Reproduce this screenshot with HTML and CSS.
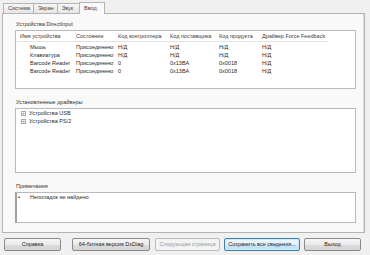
FILE: index.html
```html
<!DOCTYPE html>
<html lang="ru">
<head>
  <meta charset="UTF-8" />
  <title>Средство диагностики DirectX</title>
  <link rel="stylesheet" href="styles.css">
</head>
<body>

  <div class="tabs">
    <div class="tab">Система</div>
    <div class="tab">Экран</div>
    <div class="tab">Звук</div>
    <div class="tab active">Ввод</div>
  </div>

  <div class="page">
    <div class="group">
      <div class="group-title">Устройства DirectInput</div>
      <div class="box devices">
        <div class="list-head">
          <span>Имя устройства</span>
          <span>Состояние</span>
          <span>Код контроллера</span>
          <span>Код поставщика</span>
          <span>Код продукта</span>
          <span>Драйвер Force Feedback</span>
        </div>
        <div class="list-row">
          <span class="name">Мышь</span><span>Присоединено</span><span>Н/Д</span><span>Н/Д</span><span>Н/Д</span><span>Н/Д</span>
        </div>
        <div class="list-row">
          <span class="name">Клавиатура</span><span>Присоединено</span><span>Н/Д</span><span>Н/Д</span><span>Н/Д</span><span>Н/Д</span>
        </div>
        <div class="list-row">
          <span class="name">Barcode Reader</span><span>Присоединено</span><span>0</span><span>0x13BA</span><span>0x0018</span><span>Н/Д</span>
        </div>
        <div class="list-row">
          <span class="name">Barcode Reader</span><span>Присоединено</span><span>0</span><span>0x13BA</span><span>0x0018</span><span>Н/Д</span>
        </div>
      </div>
    </div>

    <div class="group">
      <div class="group-title">Установленные драйверы</div>
      <div class="box drivers">
        <div class="tree-item"><span class="expander">+</span>Устройства USB</div>
        <div class="tree-item"><span class="expander">+</span>Устройства PS/2</div>
      </div>
    </div>

    <div class="group">
      <div class="group-title">Примечания</div>
      <div class="box notes">
        <div class="note"><span class="bullet">•</span>Неполадок не найдено.</div>
      </div>
    </div>
  </div>

  <div class="buttons">
    <button class="btn help">Справка</button>
    <button class="btn x64">64-битная версия DxDiag</button>
    <button class="btn next" disabled>Следующая страница</button>
    <button class="btn save focused">Сохранить все сведения...</button>
    <button class="btn exit">Выход</button>
  </div>

</body>
</html>
```

FILE: styles.css
```css
body {
  margin: 0;
  width: 370px;
  height: 255px;
  background-color: #f0f0f0;
  font-family: "Liberation Sans", Arial, sans-serif;
  font-size: 5.5px;
  color: #2a2a2a;
  overflow: hidden;
  white-space: nowrap;
}

.tabs {
  display: flex;
  align-items: flex-end;
  height: 13px;
  padding-left: 3px;
}

.tab {
  height: 9px;
  padding: 0 4px;
  line-height: 9px;
  border: 1px solid #b4b4b4;
  border-bottom: none;
  background: linear-gradient(#f6f6f6, #e6e6e6);
  color: #444;
  margin-right: -1px;
}

.tab:nth-child(1) { width: 21px; }
.tab:nth-child(2) { width: 15px; }
.tab:nth-child(3) { width: 13px; }

.tab.active {
  width: 16px;
  height: 11px;
  line-height: 10px;
  background: #f9f9f9;
  position: relative;
  z-index: 1;
  margin-bottom: -1px;
}

.page {
  box-sizing: border-box;
  height: 220px;
  margin: 0 5px 0 2px;
  border: 1px solid #b4b4b4;
  box-shadow: inset -1px 0 0 #dcdcdc;
  background-color: #f9f9f9;
  padding: 6px 8px 0 12px;
}

.group-title {
  height: 10px;
  line-height: 8px;
  padding-left: 1px;
  color: #333;
}

.box {
  box-sizing: border-box;
  background-color: #ffffff;
  border: 1px solid #b9b9b9;
}

.devices {
  height: 59px;
  margin-bottom: 9px;
}

.list-head,
.list-row {
  display: grid;
  grid-template-columns: 56px 42px 52px 49px 43px 64px;
  padding-left: 4px;
}

.list-head {
  width: 308px;
  height: 10px;
  line-height: 10px;
  border-bottom: 1px solid #e3e3e3;
  margin-bottom: 1px;
  color: #3a3a3a;
}

.list-row {
  height: 8px;
  line-height: 8px;
}

.list-row .name {
  padding-left: 10px;
}

.drivers {
  height: 65px;
  padding: 0 0 0 5px;
  margin-bottom: 9px;
}

.tree-item {
  display: flex;
  align-items: center;
  height: 8px;
}

.expander {
  box-sizing: border-box;
  width: 5px;
  height: 5px;
  margin-right: 3px;
  border: 1px solid #a8a8a8;
  font-size: 5px;
  line-height: 3px;
  text-align: center;
  color: #777;
}

.notes {
  height: 31px;
  border-left: 2px solid #a0a0a0;
  padding: 0 0 0 1px;
}

.note {
  display: flex;
  height: 8px;
  line-height: 8px;
}

.bullet {
  width: 12px;
  color: #000;
}

.buttons {
  display: flex;
  align-items: center;
  height: 22px;
  padding-left: 4px;
}

.btn {
  box-sizing: border-box;
  height: 13px;
  padding: 0;
  border: 1px solid #8a8a8a;
  border-radius: 2px;
  background: linear-gradient(#f5f5f5 0%, #ebebeb 50%, #dcdcdc 51%, #d4d4d4 100%);
  font-family: inherit;
  font-size: 5.5px;
  color: #222;
}

.help { width: 57px; margin-right: 11px; }
.x64 { width: 78px; margin-right: 5px; }
.next { width: 65px; margin-right: 4px; }
.save { width: 76px; margin-right: 4px; }
.exit { width: 57px; }

.btn:disabled {
  border-color: #b8bcbf;
  background: #f3f3f3;
  color: #9a9a9a;
}

.btn.focused {
  border-color: #3c7fb1;
  background: linear-gradient(#eef7fc 0%, #dff1fb 50%, #c8e6f7 51%, #bfe0f3 100%);
  box-shadow: inset 0 0 0 1px #cfeaf9;
}
```
